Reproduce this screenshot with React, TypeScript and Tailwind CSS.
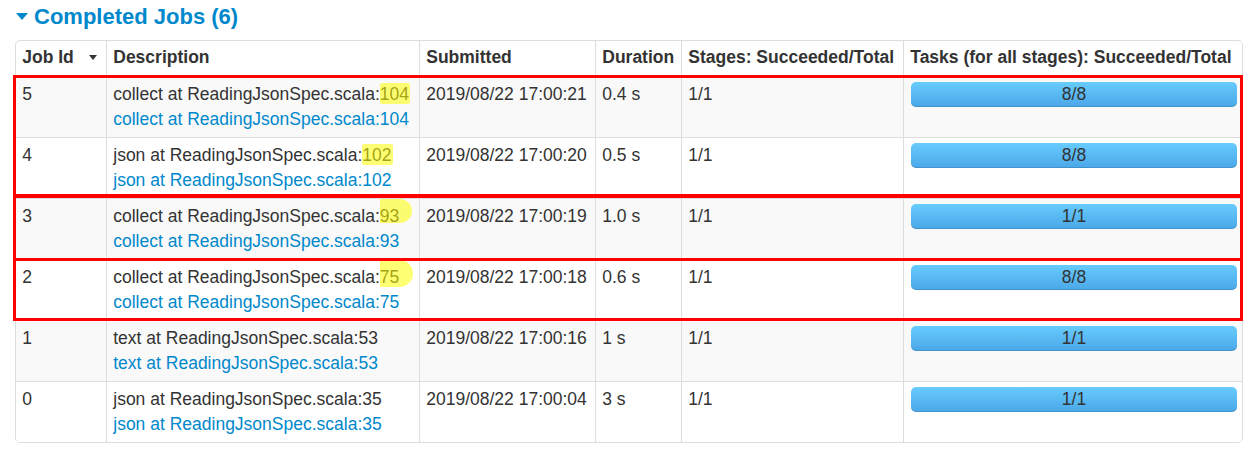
import React from 'react';

type Job = {
  id: number;
  call: string;
  line: string;
  submitted: string;
  duration: string;
  stages: string;
  tasks: string;
  mark?: 'box' | 'round93' | 'round75';
};

const jobs: Job[] = [
  { id: 5, call: 'collect', line: '104', submitted: '2019/08/22 17:00:21', duration: '0.4 s', stages: '1/1', tasks: '8/8', mark: 'box' },
  { id: 4, call: 'json', line: '102', submitted: '2019/08/22 17:00:20', duration: '0.5 s', stages: '1/1', tasks: '8/8', mark: 'box' },
  { id: 3, call: 'collect', line: '93', submitted: '2019/08/22 17:00:19', duration: '1.0 s', stages: '1/1', tasks: '1/1', mark: 'round93' },
  { id: 2, call: 'collect', line: '75', submitted: '2019/08/22 17:00:18', duration: '0.6 s', stages: '1/1', tasks: '8/8', mark: 'round75' },
  { id: 1, call: 'text', line: '53', submitted: '2019/08/22 17:00:16', duration: '1 s', stages: '1/1', tasks: '1/1' },
  { id: 0, call: 'json', line: '35', submitted: '2019/08/22 17:00:04', duration: '3 s', stages: '1/1', tasks: '1/1' },
];

function LineNumber({ job }: { job: Job }) {
  if (!job.mark) return <>{job.line}</>;
  return (
    <span className="relative">
      {job.line}
      {job.mark === 'box' && (
        <span className="absolute left-0 -right-px -top-px bottom-0 rounded-[2px] bg-[#ffff00]/55" />
      )}
      {job.mark === 'round93' && (
        <span className="absolute left-0 -right-[13px] -top-[7px] bottom-[3px] rounded-r-full bg-[#ffff00]/55" />
      )}
      {job.mark === 'round75' && (
        <span className="absolute left-0 -right-[14px] -top-[7px] bottom-0 rounded-r-full bg-[#ffff00]/55" />
      )}
    </span>
  );
}

export default function App() {
  const th = 'border-l border-[#ddd] px-[6.25px] pt-[4px] pb-[6px] text-left font-bold align-top';
  const td = 'border-l border-t border-[#ddd] px-[6.25px] pt-[5px] pb-[5px] align-top';

  return (
    <main className="min-h-screen bg-white pl-[15px] text-[17.5px] leading-[25px] text-[#333] [font-family:'Liberation_Sans',Arial,sans-serif]">
      <div className="flex h-[32px] items-center text-[22px] font-bold text-[#0088cc]">
        <span className="ml-[1px] mr-[6px] h-0 w-0 border-x-[6px] border-t-[7px] border-x-transparent border-t-[#0088cc]" />
        Completed Jobs (6)
      </div>

      <div className="relative mt-[8px] w-[1228px]">
        <div className="overflow-hidden rounded-[5px] border border-[#ddd]">
          <table className="w-[1226px] table-fixed border-separate border-spacing-0">
            <colgroup>
              <col className="w-[90px]" />
              <col className="w-[313px]" />
              <col className="w-[176px]" />
              <col className="w-[86px]" />
              <col className="w-[222px]" />
              <col className="w-[339px]" />
            </colgroup>
            <thead>
              <tr>
                <th className={th.replace('border-l ', '')}>
                  Job Id
                  <span className="ml-[15px] inline-block h-0 w-0 -translate-y-[3px] border-x-[4px] border-t-[5px] border-x-transparent border-t-[#333]" />
                </th>
                <th className={th}>Description</th>
                <th className={th}>Submitted</th>
                <th className={th}>Duration</th>
                <th className={th}>Stages: Succeeded/Total</th>
                <th className={th}>Tasks (for all stages): Succeeded/Total</th>
              </tr>
            </thead>
            <tbody>
              {jobs.map((job, i) => (
                <tr key={job.id} className={i % 2 === 0 ? 'bg-[#f9f9f9]' : 'bg-white'}>
                  <td className={td.replace('border-l ', '')}>{job.id}</td>
                  <td className={td}>
                    <div>
                      {job.call} at ReadingJsonSpec.scala:<LineNumber job={job} />
                    </div>
                    <div className="text-[#0088cc]">
                      {job.call} at ReadingJsonSpec.scala:{job.line}
                    </div>
                  </td>
                  <td className={td}>{job.submitted}</td>
                  <td className={td}>{job.duration}</td>
                  <td className={td}>{job.stages}</td>
                  <td className={`${td} pl-[7px] pr-[5px]`}>
                    <div className="h-[25px] rounded-[5px] bg-gradient-to-b from-[#68ccfd] to-[#4aa7e8] text-center leading-[25px] shadow-[inset_0_-1px_0_rgba(0,0,0,0.12)]">
                      {job.tasks}
                    </div>
                  </td>
                </tr>
              ))}
            </tbody>
          </table>
        </div>

        {/* red annotation boxes */}
        <div className="pointer-events-none absolute -left-[2px] top-[35px] h-[122px] w-[1230px] border-[3.5px] border-[#ff0000]" />
        <div className="pointer-events-none absolute -left-[2px] top-[155px] h-[66px] w-[1230px] border-[3.5px] border-[#ff0000]" />
        <div className="pointer-events-none absolute -left-[2px] top-[218px] h-[63px] w-[1230px] border-[3.5px] border-[#ff0000]" />
      </div>
    </main>
  );
}
